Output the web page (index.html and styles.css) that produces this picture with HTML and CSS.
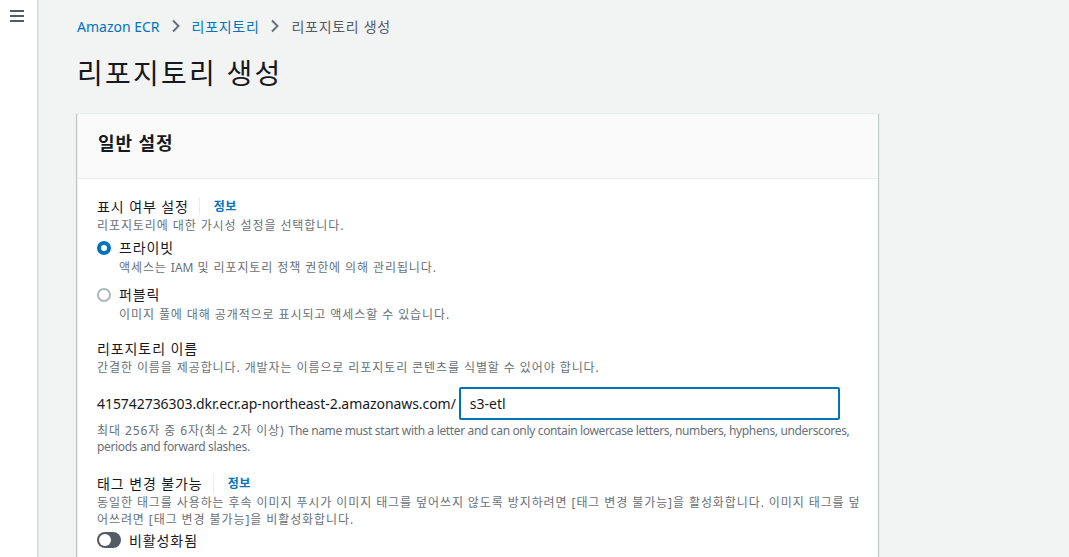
FILE: index.html
```html
<!DOCTYPE html>
<html lang="ko">
<head>
<meta charset="utf-8">
<title>리포지토리 생성</title>
<link rel="stylesheet" href="styles.css">
</head>
<body>
<div class="layout">
  <aside class="side">
    <button class="menu" aria-label="메뉴">
      <svg width="14" height="12" viewBox="0 0 14 12"><path d="M0 1h14M0 6h14M0 11h14" stroke="#545b64" stroke-width="2"/></svg>
    </button>
  </aside>
  <main class="main">
    <nav class="crumbs">
      <a class="crumb-link lat">Amazon ECR</a>
      <svg class="chev" width="10" height="14" viewBox="0 0 10 14"><path d="M2 1.5l5.5 5.5L2 12.5" fill="none" stroke="#687078" stroke-width="2"/></svg>
      <a class="crumb-link">리포지토리</a>
      <svg class="chev" width="10" height="14" viewBox="0 0 10 14"><path d="M2 1.5l5.5 5.5L2 12.5" fill="none" stroke="#687078" stroke-width="2"/></svg>
      <span class="crumb-current">리포지토리 생성</span>
    </nav>
    <h1 class="title">리포지토리 생성</h1>
    <section class="card">
      <header class="card-head"><h2>일반 설정</h2></header>
      <div class="card-body">
        <div class="field">
          <div class="label-row"><span class="label">표시 여부 설정</span><span class="sep"></span><a class="info">정보</a></div>
          <p class="desc">리포지토리에 대한 가시성 설정을 선택합니다.</p>
          <div class="radios">
            <div class="radio">
              <span class="dot on"></span>
              <div><div class="r-label">프라이빗</div><div class="desc">액세스는 <span class="lat">IAM</span> 및 리포지토리 정책 권한에 의해 관리됩니다.</div></div>
            </div>
            <div class="radio">
              <span class="dot"></span>
              <div><div class="r-label">퍼블릭</div><div class="desc">이미지 풀에 대해 공개적으로 표시되고 액세스할 수 있습니다.</div></div>
            </div>
          </div>
        </div>
        <div class="field">
          <div class="label-row"><span class="label">리포지토리 이름</span></div>
          <p class="desc">간결한 이름을 제공합니다. 개발자는 이름으로 리포지토리 콘텐츠를 식별할 수 있어야 합니다.</p>
          <div class="name-row">
            <span class="prefix lat">415742736303.dkr.ecr.ap-northeast-2.amazonaws.com/</span>
            <div class="input lat">s3-etl</div>
          </div>
          <p class="hint">최대 256자 중 6자(최소 2자 이상) <span class="hint-lat">The name must start with a letter and can only contain lowercase letters, numbers, hyphens, underscores, periods and forward slashes.</span></p>
        </div>
        <div class="field">
          <div class="label-row"><span class="label">태그 변경 불가능</span><span class="sep"></span><a class="info">정보</a></div>
          <p class="desc wrap-all">동일한 태그를 사용하는 후속 이미지 푸시가 이미지 태그를 덮어쓰지 않도록 방지하려면 [태그 변경 불가능]을 활성화합니다. 이미지 태그를 덮어쓰려면 [태그 변경 불가능]을 비활성화합니다.</p>
          <div class="toggle-row"><span class="toggle"><span class="knob"></span></span><span class="t-label">비활성화됨</span></div>
        </div>
      </div>
    </section>
  </main>
</div>
</body>
</html>
```
FILE: styles.css
```css
* { box-sizing: border-box; }
html, body { margin: 0; padding: 0; height: 100%; overflow: hidden; }
body {
  font-family: "Noto Sans", "Noto Sans CJK KR", sans-serif;
  font-size: 14px;
  color: #16191f;
  background: #f2f3f3;
  letter-spacing: 0.065em;
}
.lat { letter-spacing: 0; }
.layout { display: flex; height: 557px; overflow: hidden; }
.side {
  width: 38px;
  flex: none;
  background: #fff;
  border-right: 1px solid #d5dbdb;
  box-shadow: 1px 0 1px rgba(0,0,0,0.05);
}
.menu {
  border: 0; background: none; padding: 0;
  margin: 10px 0 0 10px;
  display: block; width: 14px; height: 12px;
}
.menu svg { display: block; }
.main { flex: 1; padding: 0 0 0 39px; overflow: hidden; }
.crumbs {
  display: flex; align-items: center; gap: 11px;
  height: 52px;
  font-size: 14px;
  letter-spacing: 0.05em;
}
.crumb-link { color: #0073bb; }
.crumb-link.lat { letter-spacing: 0; }
.crumb-current { color: #545b64; }
.chev { display: block; }
.title {
  margin: 0; font-weight: 400; font-size: 28px; line-height: 40px;
  color: #16191f;
  letter-spacing: 0.08em;
  padding: 1px 0 20px;
}
.card {
  width: 801px;
  background: #fff;
  border-left: 1px solid #eaeded;
  border-top: 1px solid #eaeded;
  box-shadow: 0 1px 1px 0 rgba(0,28,36,0.3), 1px 1px 1px 0 rgba(0,28,36,0.15), -1px 1px 1px 0 rgba(0,28,36,0.15);
}
.card-head {
  background: #fafafa;
  border-bottom: 1px solid #eaeded;
  height: 65px;
  padding: 16px 20px 0;
}
.card-head h2 { margin: 0; font-size: 18px; font-weight: 700; line-height: 26px; }
.card-body { padding: 16px 16px 20px 19px; }
.field { margin-bottom: 13px; }
.label-row { display: flex; align-items: center; height: 22px; }
.label { font-size: 14px; }
.sep { width: 1px; height: 18px; background: #eaeded; margin: 0 14px 0 10px; }
.info { color: #0073bb; font-size: 12px; font-weight: 700; letter-spacing: 0.04em; }
.desc { margin: 0; font-size: 12px; line-height: 18px; color: #687078; }
.field > .desc { line-height: 17px; }
.wrap-all { word-break: break-all; }
.radios { margin-top: 3px; display: flex; flex-direction: column; gap: 7px; }
.radio { display: flex; gap: 8px; align-items: flex-start; }
.dot {
  width: 14px; height: 14px; border-radius: 50%;
  border: 2px solid #aab7b8; margin-top: 4px; flex: none;
}
.dot.on { border: 4px solid #0073bb; }
.r-label { font-size: 14px; line-height: 22px; }
.name-row { display: flex; align-items: center; margin-top: 11px; }
.prefix { font-size: 14px; margin-right: 3px; white-space: nowrap; flex: none; letter-spacing: -0.06px; }
.input {
  flex: none;
  width: 381px; height: 33px;
  border: 2px solid #0073bb; border-radius: 2px;
  padding: 0 9px; display: flex; align-items: center;
  font-size: 14px;
}
.hint { margin: 3px 0 0; padding-bottom: 4px; font-size: 12px; line-height: 16px; color: #687078; width: 760px; }
.hint-lat { letter-spacing: -0.35px; }
.toggle-row { display: flex; align-items: center; gap: 8px; margin-top: 2px; }
.toggle {
  width: 24px; height: 16px; border-radius: 8px; background: #545b64;
  position: relative; display: block;
}
.knob {
  position: absolute; left: 2px; top: 2px; width: 12px; height: 12px;
  border-radius: 50%; background: #fff;
}
.t-label { font-size: 14px; }
```
